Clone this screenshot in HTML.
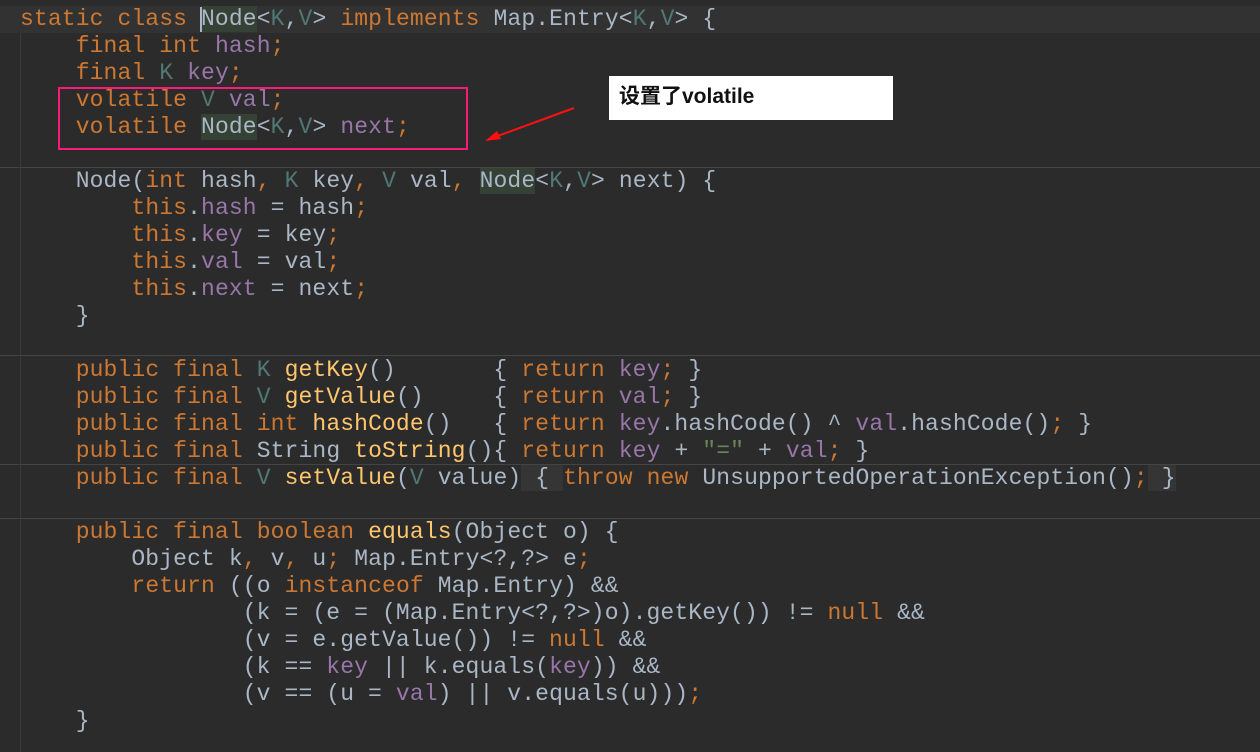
<!DOCTYPE html>
<html><head><meta charset="utf-8"><style>
html,body{margin:0;padding:0;background:#2b2b2b;width:1260px;height:752px;overflow:hidden}
pre{margin:0;position:absolute;left:20px;top:6px;font-family:"Liberation Mono",monospace;font-size:23px;letter-spacing:0.12px;line-height:27px;color:#a9b7c6}
.k{color:#cc7832}.f{color:#9876aa}.t{color:#507874}.s{color:#6a8759}
.h{background:#344134}
.band{position:absolute;left:0;top:6px;width:1260px;height:27px;background:#323232}
.sep{position:absolute;left:0;width:1260px;height:1px;background:#444}
.br{background:#353535}
</style></head><body>
<div class="band"></div>
<div class="sep" style="top:167px"></div>
<div class="sep" style="top:355px"></div>
<div class="sep" style="top:464px"></div>
<div class="sep" style="top:518px"></div>
<div style="position:absolute;left:20px;top:33px;width:1px;height:719px;background:#3a3a3a"></div>
<pre><span class="k">static class </span><span class="h">Node</span>&lt;<span class="t">K</span>,<span class="t">V</span>&gt; <span class="k">implements </span>Map.Entry&lt;<span class="t">K</span>,<span class="t">V</span>&gt; {
    <span class="k">final int </span><span class="f">hash</span><span class="k">;</span>
    <span class="k">final </span><span class="t">K </span><span class="f">key</span><span class="k">;</span>
    <span class="k">volatile </span><span class="t">V </span><span class="f">val</span><span class="k">;</span>
    <span class="k">volatile </span><span class="h">Node</span>&lt;<span class="t">K</span>,<span class="t">V</span>&gt; <span class="f">next</span><span class="k">;</span>

    Node(<span class="k">int </span>hash<span class="k">, </span><span class="t">K </span>key<span class="k">, </span><span class="t">V </span>val<span class="k">, </span><span class="h">Node</span>&lt;<span class="t">K</span>,<span class="t">V</span>&gt; next) {
        <span class="k">this</span>.<span class="f">hash </span>= hash<span class="k">;</span>
        <span class="k">this</span>.<span class="f">key </span>= key<span class="k">;</span>
        <span class="k">this</span>.<span class="f">val </span>= val<span class="k">;</span>
        <span class="k">this</span>.<span class="f">next </span>= next<span class="k">;</span>
    }

    <span class="k">public final </span><span class="t">K </span><span style="color:#ffc66d">getKey</span>()       { <span class="k">return </span><span class="f">key</span><span class="k">; </span>}
    <span class="k">public final </span><span class="t">V </span><span style="color:#ffc66d">getValue</span>()     { <span class="k">return </span><span class="f">val</span><span class="k">; </span>}
    <span class="k">public final int </span><span style="color:#ffc66d">hashCode</span>()   { <span class="k">return </span><span class="f">key</span>.hashCode() ^ <span class="f">val</span>.hashCode()<span class="k">; </span>}
    <span class="k">public final </span>String <span style="color:#ffc66d">toString</span>(){ <span class="k">return </span><span class="f">key </span>+ <span class="s">"="</span> + <span class="f">val</span><span class="k">; </span>}
    <span class="k">public final </span><span class="t">V </span><span style="color:#ffc66d">setValue</span>(<span class="t">V </span>value)<span class="br"> { </span><span class="k">throw new </span>UnsupportedOperationException()<span class="k">;</span><span class="br"> }</span>

    <span class="k">public final boolean </span><span style="color:#ffc66d">equals</span>(Object o) {
        Object k<span class="k">, </span>v<span class="k">, </span>u<span class="k">; </span>Map.Entry&lt;?,?&gt; e<span class="k">;</span>
        <span class="k">return </span>((o <span class="k">instanceof </span>Map.Entry) &amp;&amp;
                (k = (e = (Map.Entry&lt;?,?&gt;)o).getKey()) != <span class="k">null </span>&amp;&amp;
                (v = e.getValue()) != <span class="k">null </span>&amp;&amp;
                (k == <span class="f">key </span>|| k.equals(<span class="f">key</span>)) &amp;&amp;
                (v == (u = <span class="f">val</span>) || v.equals(u)))<span class="k">;</span>
    }</pre>
<div style="position:absolute;left:200px;top:7px;width:2px;height:25px;background:#a9b7c6"></div>
<div style="position:absolute;left:58px;top:87px;width:406px;height:59px;border:2px solid #ff1a7a"></div>
<div style="position:absolute;left:609px;top:76px;width:284px;height:44px;background:#fff"></div>
<div style="position:absolute;left:619px;top:82px;font-family:'Liberation Sans','Noto Sans CJK SC',sans-serif;font-weight:bold;font-size:21px;line-height:30px;color:#111">设置了volatile</div>
<svg style="position:absolute;left:0;top:0" width="1260" height="752">
<line x1="574" y1="108" x2="495" y2="137" stroke="#ff1010" stroke-width="2"/>
<polygon points="485,141 497,131 501,139" fill="#ff1010"/>
</svg>
</body></html>
